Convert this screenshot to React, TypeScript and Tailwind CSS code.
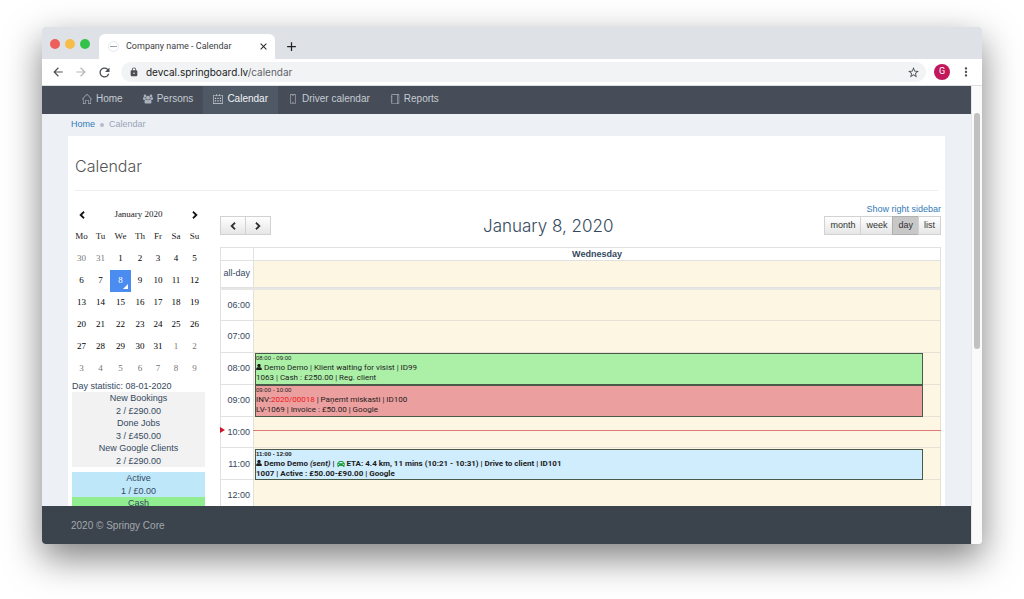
import type { ReactNode } from "react";
import clsx from "clsx";
import { FaCar, FaChevronLeft, FaChevronRight, FaUser } from "react-icons/fa";
import {
  MdAdd,
  MdArrowBack,
  MdArrowForward,
  MdClose,
  MdLock,
  MdMoreVert,
  MdRefresh,
  MdStarBorder,
} from "react-icons/md";
import { SlCalender, SlHome, SlNotebook, SlScreenSmartphone } from "react-icons/sl";

function GroupIcon({ className }: { className?: string }) {
  return (
    <svg viewBox="0 0 20 18" fill="currentColor" className={className}>
      <circle cx="4" cy="2.8" r="2.6" />
      <circle cx="16" cy="2.8" r="2.6" />
      <circle cx="10" cy="6.4" r="3.9" />
      <path d="M0 8.6C0 6.6.4 5.4 1.4 5.4c.8.5 1.7.8 2.6.8.4 0 .9 0 1.3-.2 0 1.5.3 2.6.9 3.5-1.2 0-2.2.5-2.9 1.3H2C.7 10.8 0 10 0 8.6z" />
      <path d="M20 8.6c0-2-.4-3.2-1.4-3.2-.8.5-1.7.8-2.6.8-.4 0-.9 0-1.3-.2 0 1.5-.3 2.6-.9 3.5 1.2 0 2.2.5 2.9 1.3H18c1.300 0 2-.8 2-2.2z" />
      <path d="M3 15.3c0-2.7.8-5.2 3.3-5.2 1 .9 2.3 1.5 3.7 1.5s2.7-.6 3.7-1.5c2.5 0 3.3 2.5 3.3 5.2 0 1.7-1.2 2.7-2.8 2.7H5.8C4.200 18 3 17 3 15.3z" />
    </svg>
  );
}

const NAV = [
  { label: "Home", icon: SlHome },
  { label: "Persons", icon: GroupIcon },
  { label: "Calendar", icon: SlCalender, active: true },
  { label: "Driver calendar", icon: SlScreenSmartphone },
  { label: "Reports", icon: SlNotebook },
];

const WEEKDAYS = [
  { label: "Mo", width: "w-[19px]" },
  { label: "Tu", width: "w-[19px]" },
  { label: "We", width: "w-[21px]" },
  { label: "Th", width: "w-[18px]" },
  { label: "Fr", width: "w-[18px]" },
  { label: "Sa", width: "w-[18px]" },
  { label: "Su", width: "w-[19px]" },
];

const WEEKS = [
  [30, 31, 1, 2, 3, 4, 5],
  [6, 7, 8, 9, 10, 11, 12],
  [13, 14, 15, 16, 17, 18, 19],
  [20, 21, 22, 23, 24, 25, 26],
  [27, 28, 29, 30, 31, 1, 2],
  [3, 4, 5, 6, 7, 8, 9],
];

const DAY_STATS = [
  { label: "New Bookings", value: "2 / £290.00" },
  { label: "Done Jobs", value: "3 / £450.00" },
  { label: "New Google Clients", value: "2 / £290.00" },
];

const STATUS_STATS = [
  { label: "Active", value: "1 / £0.00", color: "bg-[#bfe7fa]" },
  { label: "Cash", color: "bg-[#90ee90]" },
];

const FIRST_HOUR = 6;
const HOURS = [6, 7, 8, 9, 10, 11, 12];
const NOW = 10.42;

const VIEWS = ["month", "week", "day", "list"];

// vertical place of an hour inside the time grid, in percent
const place = (hour: number) => `${((hour - FIRST_HOUR) / HOURS.length) * 100}%`;

function isOtherMonth(week: number, day: number) {
  return (week === 0 && day > 7) || (week > 3 && day < 10);
}

function BrowserBar() {
  return (
    <header className="font-['Roboto',sans-serif]">
      <div className="flex h-8 items-end bg-[#dee1e6] pl-2">
        <div className="flex h-full w-[49px] items-center gap-[5px] pt-[2px]">
          <span className="size-[10px] rounded-full bg-[#ee5f5b]" />
          <span className="size-[10px] rounded-full bg-[#f6bd4a]" />
          <span className="size-[10px] rounded-full bg-[#35c24b]" />
        </div>
        <div className="flex h-[25px] w-44 items-center rounded-t-md bg-white pr-[6px] pl-[9px]">
          <span className="flex size-[11px] items-center justify-center rounded-full border border-gray-200">
            <span className="h-px w-[7px] bg-gray-400" />
          </span>
          <span className="ml-[7px] flex-1 text-[9px] whitespace-nowrap text-[#3c4043]">
            Company name - Calendar
          </span>
          <button aria-label="Close tab">
            <MdClose className="size-[11px] text-[#202124]" />
          </button>
        </div>
        <button aria-label="New tab" className="ml-[9px] pb-[5px]">
          <MdAdd className="size-[15px] text-[#202124]" />
        </button>
      </div>

      <div className="flex h-[27px] items-center border-b border-[#dcdfe3] bg-white pr-[9px] pl-[9px] text-[#4c5054]">
        <button aria-label="Back">
          <MdArrowBack className="size-[14px]" />
        </button>
        <button aria-label="Forward" className="ml-[9px] text-[#b4b6b9]">
          <MdArrowForward className="size-[14px]" />
        </button>
        <button aria-label="Reload" className="ml-[9px]">
          <MdRefresh className="size-[15px]" />
        </button>
        <div className="ml-[9px] flex h-5 flex-1 items-center rounded-full bg-[#f1f3f4] pr-[6px] pl-2">
          <MdLock className="size-[10px]" />
          <span className="ml-[7px] flex-1 font-['Inter',sans-serif] text-[10px] text-[#5f6368]">
            <span className="text-[#202124]">devcal.springboard.lv</span>/calendar
          </span>
          <button aria-label="Bookmark">
            <MdStarBorder className="size-[13px]" />
          </button>
        </div>
        <span className="ml-2 flex size-4 items-center justify-center rounded-full bg-[#c2185b] text-[9px] text-white">
          G
        </span>
        <button aria-label="Menu" className="ml-[9px]">
          <MdMoreVert className="size-[14px]" />
        </button>
      </div>
    </header>
  );
}

function MiniCalendar() {
  return (
    <div className="font-['Liberation_Serif',serif] text-[9px] text-black">
      <div className="flex h-[22px] items-center justify-between px-[6px]">
        <button aria-label="Previous month">
          <FaChevronLeft className="size-2" strokeWidth={50} />
        </button>
        <span className="text-[#222]">January 2020</span>
        <button aria-label="Next month">
          <FaChevronRight className="size-2" strokeWidth={50} />
        </button>
      </div>
      <table className="table-fixed border-collapse text-center">
        <thead>
          <tr className="h-[22px]">
            {WEEKDAYS.map((d) => (
              <th key={d.label} className={clsx("p-0 font-normal text-[#222]", d.width)}>
                {d.label}
              </th>
            ))}
          </tr>
        </thead>
        <tbody>
          {WEEKS.map((days, week) => (
            <tr key={week} className="h-[22px]">
              {days.map((day) => {
                const selected = week === 1 && day === 8;
                return (
                  <td
                    key={day}
                    className={clsx(
                      "relative p-0",
                      selected && "bg-[#4a8cf0] text-white",
                      isOtherMonth(week, day) && "text-[#777]",
                    )}
                  >
                    {day}
                    {selected && (
                      <span className="absolute right-[3px] bottom-[3px] border-b-[5px] border-l-[5px] border-b-white border-l-transparent" />
                    )}
                  </td>
                );
              })}
            </tr>
          ))}
        </tbody>
      </table>
    </div>
  );
}

function Stat({ label, value, color }: { label: string; value?: string; color?: string }) {
  return (
    <div className={clsx("flex h-[25px] flex-col justify-between text-center leading-3", color)}>
      <span>{label}</span>
      {value && <span>{value}</span>}
    </div>
  );
}

function Sidebar() {
  return (
    <aside className="w-[133px] shrink-0 pt-[13px] text-[9px]">
      <MiniCalendar />
      <div className="leading-3">Day statistic: 08-01-2020</div>
      <div className="bg-[#f2f2f2]">
        {DAY_STATS.map((s) => (
          <Stat key={s.label} {...s} />
        ))}
      </div>
      <div className="mt-[5px]">
        {STATUS_STATS.map((s) => (
          <Stat key={s.label} {...s} />
        ))}
      </div>
    </aside>
  );
}

type EventProps = {
  start: number;
  time: string;
  color: string;
  children: ReactNode;
};

function CalendarEvent({ start, time, color, children }: EventProps) {
  return (
    <div
      className={clsx(
        "absolute right-[18px] left-[2px] overflow-hidden border border-[#4a5a4a] font-['Roboto',sans-serif] text-[8px] leading-[10px] whitespace-nowrap text-[#1c1c1c]",
        color,
      )}
      style={{ top: place(start), height: `${100 / HOURS.length}%` }}
    >
      <div className="font-['Liberation_Sans',sans-serif] text-[6px] leading-[9px]">{time}</div>
      {children}
    </div>
  );
}

function Toolbar() {
  return (
    <div>
      <div className="text-right text-[9px] leading-[13px]">
        <a href="#sidebar" className="text-[#337ab7]">
          Show right sidebar
        </a>
      </div>
      <div className="flex h-[19px] items-center justify-between">
        <div className="flex">
          <button
            aria-label="Previous day"
            className="flex h-[19px] w-[26px] items-center justify-center border border-[#d2d2d2] bg-gradient-to-b from-white to-[#e6e6e6] text-[#222]"
          >
            <FaChevronLeft className="size-2" strokeWidth={50} />
          </button>
          <button
            aria-label="Next day"
            className="-ml-px flex h-[19px] w-[26px] items-center justify-center border border-[#d2d2d2] bg-gradient-to-b from-white to-[#e6e6e6] text-[#222]"
          >
            <FaChevronRight className="size-2" strokeWidth={50} />
          </button>
        </div>
        <h2 className="font-['Inter',sans-serif] text-[17px] leading-5 font-light">January 8, 2020</h2>
        <div className="flex text-[9px] text-[#333]">
          {VIEWS.map((view) => (
            <button
              key={view}
              className={clsx(
                "-ml-px h-[19px] border px-[5px]",
                view === "day"
                  ? "border-[#b0b0b0] bg-[#c8c8c8]"
                  : "border-[#d2d2d2] bg-gradient-to-b from-white to-[#e6e6e6]",
              )}
            >
              {view}
            </button>
          ))}
        </div>
      </div>
    </div>
  );
}

function DayView() {
  return (
    <div className="mt-3 text-[9px]">
      <table className="w-full table-fixed border-collapse">
        <thead>
          <tr className="h-[13px] leading-3">
            <th className="w-[33px] border border-[#e1e1e1] p-0" />
            <th className="border border-[#e1e1e1] p-0 font-bold">Wednesday</th>
          </tr>
        </thead>
        <tbody>
          <tr className="h-[27px]">
            <td className="border border-[#e1e1e1] p-0 pr-[3px] text-right">all-day</td>
            <td className="border border-[#e1e1e1] bg-[#fdf6e2] p-0" />
          </tr>
        </tbody>
      </table>
      <div className="h-[2px] bg-[#e8e6e4]" />

      <div className="relative">
        <table className="h-[222px] w-full table-fixed border-collapse">
          <tbody>
            {HOURS.map((hour) => (
              <tr key={hour}>
                <th
                  scope="row"
                  className="w-[33px] border border-t-0 border-[#e1e1e1] p-0 pt-px pr-[3px] text-right font-normal"
                >
                  {String(hour).padStart(2, "0")}:00
                </th>
                <td className="border border-t-0 border-[#e6e1d4] bg-[#fdf6e2] p-0" />
              </tr>
            ))}
          </tbody>
        </table>

        {/* Events */}
        <div className="absolute inset-y-0 right-0 left-[33px]">
          <CalendarEvent start={8} time="08:00 - 09:00" color="bg-[#acf0a8]">
            <div>
              <FaUser className="mr-[2px] inline size-[6px] align-baseline" strokeWidth={40} />
              Demo Demo | Klient waiting for visist | ID99
            </div>
            <div>1063 | Cash : £250.00 | Reg. client</div>
          </CalendarEvent>
          <CalendarEvent start={9} time="09:00 - 10:00" color="bg-[#ec9f9f]">
            <div>
              INV:<span className="text-[#f01818]">2020/00018</span> | Paņemt miskasti | ID100
            </div>
            <div>LV-1069 | Invoice : £50.00 | Google</div>
          </CalendarEvent>
          <CalendarEvent start={11} time="11:00 - 12:00" color="bg-[#d0edfd] font-bold">
            <div>
              <FaUser className="mr-[2px] inline size-[6px] align-baseline" strokeWidth={40} />
              Demo Demo <i>(sent)</i> | <FaCar className="inline size-2 align-text-bottom text-[#1f9d3c]" /> ETA:
              4.4 km, 11 mins (10:21 - 10:31) | Drive to client | ID101
            </div>
            <div>1007 | Active : £50.00-£90.00 | Google</div>
          </CalendarEvent>
          <div className="absolute inset-x-0 border-t border-[#e07a75]" style={{ top: place(NOW) }} />
        </div>
        <div
          className="absolute left-0 -mt-[3px] border-y-[3px] border-l-[5px] border-y-transparent border-l-[#d0142c]"
          style={{ top: place(NOW) }}
        />
      </div>
    </div>
  );
}

export default function App() {
  return (
    <div className="h-screen bg-white px-[42px] pt-[27px] pb-[55px] font-['Liberation_Sans',sans-serif] text-[#34495e]">
      <div className="flex h-full flex-col overflow-hidden rounded-[4px] bg-white shadow-[0_14px_36px_rgba(0,0,0,0.5)]">
        <BrowserBar />
        <div className="flex min-h-0 flex-1">
          <div className="flex min-w-0 flex-1 flex-col bg-[#edf1f6]">
            <nav className="flex h-7 shrink-0 bg-[#464d58] pl-[30px] text-[10px] text-[#c5cbd3]">
              {NAV.map(({ label, icon: Icon, active }) => (
                <a
                  key={label}
                  href="#"
                  className={clsx(
                    "flex items-center gap-[4px] px-[10px] pb-[3px]",
                    active && "bg-[#4f5965] text-[#f1f3f5]",
                  )}
                >
                  <Icon className="size-[10px] opacity-80" />
                  {label}
                </a>
              ))}
            </nav>

            {/* Breadcrumb */}
            <div className="flex h-[22px] shrink-0 items-center pl-[29px] text-[9px] text-[#9aa5b8]">
              <a href="#" className="text-[#337ab7]">
                Home
              </a>
              <span className="mx-[5px] size-1 rounded-full bg-[#b3bccb]" />
              <span>Calendar</span>
            </div>

            <main className="mx-[26px] min-h-0 flex-1 overflow-hidden bg-white px-1">
              <h1 className="mx-[3px] border-b border-[#eee] pt-5 pb-[14px] font-['Inter',sans-serif] text-[16px] leading-5 font-light text-[#555]">
                Calendar
              </h1>
              <div className="flex gap-[15px]">
                <Sidebar />
                <section className="min-w-0 flex-1 pt-3">
                  <Toolbar />
                  <DayView />
                </section>
              </div>
            </main>

            <footer className="flex h-[38px] shrink-0 items-center bg-[#3b434c] pl-[29px] text-[10px] text-[#a3a8af]">
              2020 © Springy Core
            </footer>
          </div>

          {/* Scrollbar */}
          <div className="flex w-[11px] justify-center border-l border-[#e6e6e6] bg-[#fafafa] pt-[27px]">
            <div className="h-[236px] w-[6px] rounded-full bg-[#c1c1c1]" />
          </div>
        </div>
      </div>
    </div>
  );
}
